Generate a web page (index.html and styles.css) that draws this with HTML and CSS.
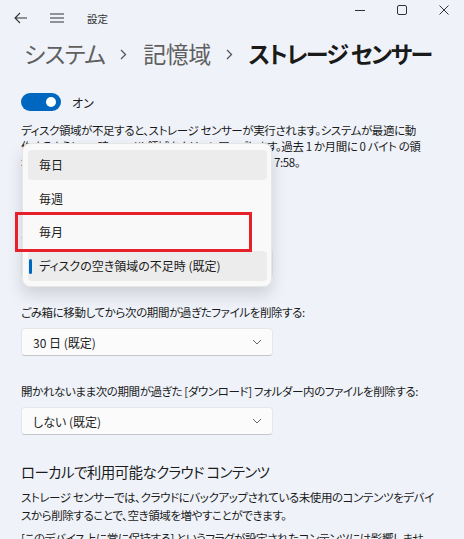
FILE: index.html
```html
<!DOCTYPE html>
<html lang="ja">
<head>
    <meta charset="UTF-8">
    <meta name="viewport" content="width=device-width, initial-scale=1.0">
    <title>設定</title>
    <link rel="stylesheet" href="styles.css">
</head>
<body>
    <!-- Barra de título -->
    <div class="titlebar">
        <svg class="tb-icon back" width="14" height="12" viewBox="0 0 14 12">
            <path d="M13 6H1.5M6 1L1 6l5 5" fill="none" stroke="#333" stroke-width="1.1"/>
        </svg>
        <svg class="tb-icon menu" width="14" height="10" viewBox="0 0 14 10">
            <path d="M0 1h14M0 5h14M0 9h14" fill="none" stroke="#333" stroke-width="1.1"/>
        </svg>
        <span class="app-name">設定</span>
        <div class="win-controls">
            <svg width="10" height="10" viewBox="0 0 10 10"><path d="M0 5.5h10" stroke="#333" stroke-width="1"/></svg>
            <svg width="10" height="10" viewBox="0 0 10 10"><rect x="0.5" y="0.5" width="9" height="9" rx="1.5" fill="none" stroke="#333" stroke-width="1"/></svg>
            <svg width="10" height="10" viewBox="0 0 10 10"><path d="M0.5 0.5l9 9M9.5 0.5l-9 9" stroke="#333" stroke-width="1"/></svg>
        </div>
    </div>

    <div class="page">
        <h1 class="breadcrumb">
            <span class="crumb">システム</span>
            <svg class="sep" width="7" height="11" viewBox="0 0 7 11"><path d="M1 1l4.5 4.5L1 10" fill="none" stroke="#555" stroke-width="1.3"/></svg>
            <span class="crumb">記憶域</span>
            <svg class="sep" width="7" height="11" viewBox="0 0 7 11"><path d="M1 1l4.5 4.5L1 10" fill="none" stroke="#555" stroke-width="1.3"/></svg>
            <span class="crumb current">ストレージ センサー</span>
        </h1>

        <div class="toggle-row">
            <span class="toggle"><span class="knob"></span></span>
            <span>オン</span>
        </div>

        <p class="text">
            ディスク領域が不足すると、ストレージ センサーが実行されます。システムが最適に動<br>
            作するように、一時ファイル領域をクリーンアップします。過去 1 か月間に 0 バイト の領<br>
            域をクリーンアップしました。最終実行日: 2024/03/11 7:58。
        </p>

        <div class="field first">
            <div class="field-label">ストレージ センサーを実行する:</div>
            <div class="dropdown">
                <span>ディスクの空き領域の不足時 (既定)</span>
                <svg width="10" height="6" viewBox="0 0 10 6"><path d="M1 1l4 4 4-4" fill="none" stroke="#666" stroke-width="1"/></svg>
            </div>
        </div>

        <div class="field">
            <div class="field-label">ごみ箱に移動してから次の期間が過ぎたファイルを削除する:</div>
            <div class="dropdown">
                <span>30 日 (既定)</span>
                <svg width="10" height="6" viewBox="0 0 10 6"><path d="M1 1l4 4 4-4" fill="none" stroke="#666" stroke-width="1"/></svg>
            </div>
        </div>

        <div class="field">
            <div class="field-label">開かれないまま次の期間が過ぎた [ダウンロード] フォルダー内のファイルを削除する:</div>
            <div class="dropdown">
                <span>しない (既定)</span>
                <svg width="10" height="6" viewBox="0 0 10 6"><path d="M1 1l4 4 4-4" fill="none" stroke="#666" stroke-width="1"/></svg>
            </div>
        </div>

        <h2 class="section-title">ローカルで利用可能なクラウド コンテンツ</h2>
        <p class="text cloud">
            ストレージ センサーでは、クラウドにバックアップされている未使用のコンテンツをデバイ<br>
            スから削除することで、空き領域を増やすことができます。
        </p>
        <p class="text cloud-2">
            [このデバイス上に常に保持する] というフラグが設定されたコンテンツには影響しませ<br>
            ん。
        </p>
    </div>

    <!-- Menú desplegable abierto -->
    <div class="popup">
        <div class="popup-item hover">毎日</div>
        <div class="popup-item">毎週</div>
        <div class="popup-item">毎月</div>
        <div class="popup-item selected">ディスクの空き領域の不足時 (既定)</div>
    </div>

    <div class="highlight-box"></div>
</body>
</html>
```

FILE: styles.css
```css
/* General */
body {
    font-family: "Noto Sans CJK JP", "Noto Sans", sans-serif;
    font-feature-settings: "palt";
    background-color: #eff3f9;
    color: #1b1b1b;
    margin: 0;
    padding: 0;
    width: 464px;
    height: 539px;
    overflow: hidden;
}

/* Barra de título */
.titlebar {
    display: flex;
    align-items: center;
    height: 36px;
    padding-left: 14px;
}

.tb-icon {
    display: block;
}

.menu {
    margin-left: 22px;
}

.app-name {
    margin-left: 23px;
    font-size: 10.5px;
    color: #333;
}

.win-controls {
    margin-left: auto;
    align-self: flex-start;
    display: flex;
    gap: 32px;
    padding: 5px 15px 0 0;
}

.win-controls svg {
    display: block;
}

/* Contenido */
.page {
    padding: 0 21px;
}

.breadcrumb {
    display: flex;
    align-items: center;
    margin: 0;
    height: 34px;
    padding-left: 3px;
    font-size: 23px;
    font-weight: 400;
    color: #5f5f5f;
    white-space: nowrap;
    letter-spacing: -0.6px;
}

.sep {
    flex-shrink: 0;
    margin: 2px 16px 0 15px;
}

.current {
    color: #1a1a1a;
    font-weight: 700;
    letter-spacing: -1.6px;
}

.toggle-row {
    display: flex;
    align-items: center;
    gap: 11px;
    height: 18px;
    margin-top: 23px;
    font-size: 12px;
}

.toggle {
    position: relative;
    width: 40px;
    height: 18px;
    border-radius: 9px;
    background-color: #0067c0;
}

.knob {
    position: absolute;
    right: 5px;
    top: 4px;
    width: 10px;
    height: 10px;
    border-radius: 50%;
    background-color: #fff;
}

.text {
    margin: 11px 0 0;
    font-size: 11.5px;
    letter-spacing: -0.4px;
    line-height: 16px;
    white-space: nowrap;
}

/* Campos */
.field {
    margin-top: 27px;
}

.field.first {
    margin-top: 55px;
}

.field-label {
    font-size: 11.5px;
    letter-spacing: -0.4px;
    line-height: 16px;
    margin-bottom: 8px;
    white-space: nowrap;
}

.dropdown {
    display: flex;
    align-items: center;
    justify-content: space-between;
    box-sizing: border-box;
    width: 252px;
    height: 28px;
    padding: 0 10px 0 11px;
    background-color: #fbfbfc;
    border: 1px solid #e4e6ea;
    border-bottom-color: #c4c6ca;
    border-radius: 4px;
    font-size: 12px;
}

.section-title {
    margin: 26px 0 0;
    font-size: 14.5px;
    letter-spacing: -0.6px;
    font-weight: 400;
    line-height: 22px;
    white-space: nowrap;
}

.text.cloud {
    margin-top: 5px;
    line-height: 18px;
}

.text.cloud-2 {
    margin-top: 5px;
    line-height: 18px;
}

/* Menú desplegable */
.popup {
    position: absolute;
    left: 22px;
    top: 143px;
    box-sizing: border-box;
    width: 250px;
    padding: 6px 4px 5px 5px;
    display: flex;
    flex-direction: column;
    gap: 3.6px;
    background-color: #f9f9f9;
    border: 1px solid #e6e6e6;
    border-radius: 8px;
    box-shadow: 0 8px 16px rgba(0, 0, 0, 0.14);
}

.popup-item {
    position: relative;
    height: 30px;
    line-height: 30px;
    padding-left: 11px;
    border-radius: 4px;
    font-size: 12px;
    color: #1b1b1b;
}

.popup-item.hover,
.popup-item.selected {
    background-color: #ececec;
}

.popup-item.selected::before {
    content: "";
    position: absolute;
    left: 1px;
    top: 8px;
    width: 3px;
    height: 15px;
    border-radius: 2px;
    background-color: #0067c0;
}

.highlight-box {
    position: absolute;
    left: 15px;
    top: 212px;
    width: 237px;
    height: 40px;
    box-sizing: border-box;
    border: 3px solid #e8202a;
}
```
